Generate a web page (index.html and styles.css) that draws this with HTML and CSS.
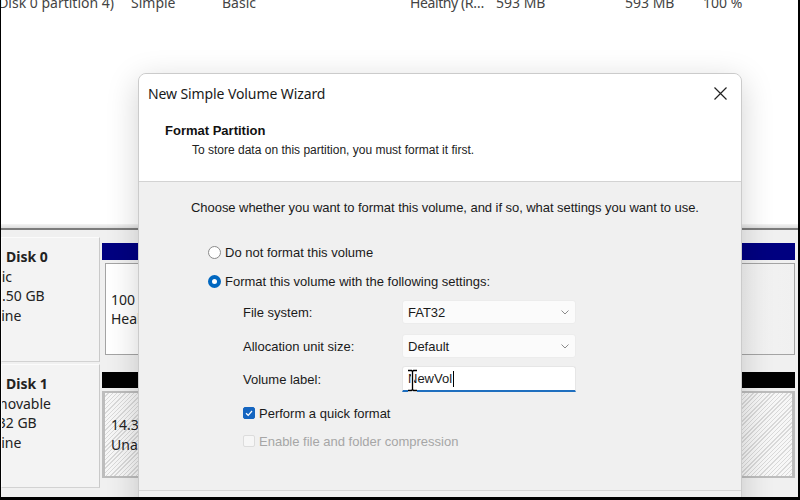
FILE: index.html
```html
<!DOCTYPE html>
<html>
<head>
<meta charset="utf-8">
<link rel="stylesheet" href="styles.css">
</head>
<body>
<div class="top">
  <div class="vrow">
    <span class="c c1"><span>(Disk 0 partition 4)</span></span>
    <span class="c c2">Simple</span>
    <span class="c c3">Basic</span>
    <span class="c c4">Healthy (R…</span>
    <span class="c c5">593 MB</span>
    <span class="c c6">593 MB</span>
    <span class="c c7">100 %</span>
  </div>
</div>
<div class="sep-light"></div>
<div class="sep-dark"></div>
<div class="map">
  <div class="disk d0">
    <div class="label">
      <div class="ltext">
        <div class="lline"><span class="icon-space"></span><b>Disk 0</b></div>
        <div class="lline">Basic</div>
        <div class="lline">237.50 GB</div>
        <div class="lline">Online</div>
      </div>
    </div>
    <div class="parts">
      <div class="bar navy"></div>
      <div class="pbox plain">
        <div class="ptext">100 MB<br>Healthy (EFI System Partition)</div>
      </div>
    </div>
  </div>
  <div class="disk d1">
    <div class="label">
      <div class="ltext">
        <div class="lline"><span class="icon-space"></span><b>Disk 1</b></div>
        <div class="lline">Removable</div>
        <div class="lline">14.32 GB</div>
        <div class="lline">Online</div>
      </div>
    </div>
    <div class="parts">
      <div class="bar black"></div>
      <div class="pbox hatch">
        <div class="ptext">14.32 GB<br>Unallocated</div>
      </div>
    </div>
  </div>
</div>

<div class="dialog">
  <div class="titlebar">
    <span class="title">New Simple Volume Wizard</span>
    <svg class="close" width="13" height="13" viewBox="0 0 13 13"><path d="M0.5 0.5 L12.5 12.5 M12.5 0.5 L0.5 12.5" stroke="#222" stroke-width="1.2" fill="none"/></svg>
  </div>
  <div class="header">
    <div class="h-title">Format Partition</div>
    <div class="h-sub">To store data on this partition, you must format it first.</div>
  </div>
  <div class="body">
    <div class="intro">Choose whether you want to format this volume, and if so, what settings you want to use.</div>
    <div class="opt opt1"><span class="radio"></span><span>Do not format this volume</span></div>
    <div class="opt opt2"><span class="radio on"></span><span>Format this volume with the following settings:</span></div>
    <div class="settings">
      <div class="srow">
        <span class="slabel">File system:</span>
        <div class="select"><span>FAT32</span>
          <svg width="8" height="5" viewBox="0 0 8 5"><path d="M0.5 0.5 L4 4 L7.5 0.5" stroke="#8a8a8a" stroke-width="1" fill="none"/></svg>
        </div>
      </div>
      <div class="srow">
        <span class="slabel">Allocation unit size:</span>
        <div class="select"><span>Default</span>
          <svg width="8" height="5" viewBox="0 0 8 5"><path d="M0.5 0.5 L4 4 L7.5 0.5" stroke="#8a8a8a" stroke-width="1" fill="none"/></svg>
        </div>
      </div>
      <div class="srow srow-input">
        <span class="slabel">Volume label:</span>
        <div class="input"><span class="val">NewVol</span><span class="caret"></span>
          <svg class="ibeam" width="11" height="23" viewBox="0 0 11 23"><path d="M1 1.5 H4.5 L5.5 2.5 L6.5 1.5 H10 M5.5 2.5 V20.5 M1 21.5 H4.5 L5.5 20.5 L6.5 21.5 H10" stroke="#fff" stroke-width="3" fill="none"/><path d="M1 1.5 H4.5 L5.5 2.5 L6.5 1.5 H10 M5.5 2.5 V20.5 M1 21.5 H4.5 L5.5 20.5 L6.5 21.5 H10" stroke="#000" stroke-width="1.3" fill="none"/></svg>
        </div>
      </div>
      <div class="chk chk1"><span class="box on"><svg width="12" height="12" viewBox="0 0 12 12"><path d="M3 6.2 L5.2 8.3 L9 4" stroke="#fff" stroke-width="1.2" fill="none"/></svg></span><span>Perform a quick format</span></div>
      <div class="chk chk2 disabled"><span class="box"></span><span>Enable file and folder compression</span></div>
    </div>
  </div>
  <div class="footer-sep"></div>
</div>
</body>
</html>
```
FILE: styles.css
```css
html, body {
  margin: 0;
  padding: 0;
}
body {
  width: 800px;
  height: 500px;
  box-sizing: border-box;
  border-left: 1px solid #000;
  border-right: 2px solid #000;
  border-bottom: 3px solid #000;
  overflow: hidden;
  position: relative;
  background: #f0f0f0;
  font-family: "Noto Sans", "Liberation Sans", sans-serif;
  color: #222;
}
.top {
  height: 224px;
  background: #fff;
  overflow: hidden;
}
.vrow {
  display: grid;
  grid-template-columns: 130px 91px 188px 86px 129px 78px 1fr;
  margin-top: -7px;
  font-size: 14px;
  line-height: 20px;
  color: #444;
}
.c { white-space: nowrap; }
.c1 {
  display: flex;
  justify-content: flex-end;
  padding-right: 17px;
  min-width: 0;
}
.c1 span { flex: none; }
.c4 { letter-spacing: -0.4px; }
.sep-light {
  height: 4px;
  background: linear-gradient(#f4f4f4, #dcdcdc);
}
.sep-dark {
  height: 2px;
  background: #7c7c7c;
}
.map {
  padding-top: 7px;
  display: flex;
  flex-direction: column;
  gap: 2px;
}
.disk {
  display: flex;
  gap: 2px;
}
.d0 { height: 125px; }
.d1 { height: 124px; }
.label {
  width: 97px;
  background: #f3f3f3;
  border: 1px solid #fbfbfb;
  border-right: 1px solid #c9c9c9;
  border-bottom: 1px solid #d2d2d2;
  overflow: hidden;
}
.ltext {
  margin-left: -24px;
  padding-top: 9px;
  font-size: 14px;
  line-height: 19.5px;
  color: #222;
  white-space: nowrap;
}
.icon-space {
  display: inline-block;
  width: 28px;
}
.parts {
  flex: 1;
  display: flex;
  flex-direction: column;
  padding-right: 3px;
}
.d0 .parts { padding-top: 6px; }
.d1 .parts { padding-top: 8px; }
.bar { height: 17px; }
.navy { background: #000080; }
.black { background: #000; height: 16px; }
.pbox {
  display: flex;
  align-items: center;
  overflow: hidden;
  white-space: nowrap;
  font-size: 14px;
  line-height: 19.5px;
  color: #222;
}
.plain {
  margin: 3px 0 0 3px;
  height: 90px;
  border: 1px solid #a4a4a4;
  background: linear-gradient(90deg, #fff 60%, #f0f0f0);
}
.hatch {
  margin: 3px 0 0 0;
  height: 83px;
  border: 2px solid #bdbdbd;
  border-width: 2px 3px;
  background: repeating-linear-gradient(135deg, #f7f7f7 0 2px, #d9d9d9 2px 3px);
}
.plain .ptext { padding-left: 5px; }
.hatch .ptext { padding-left: 6px; }

/* dialog */
.dialog {
  position: absolute;
  left: 137px;
  top: 73px;
  width: 602px;
  height: 460px;
  background: #f0f0f0;
  border: 1px solid #cbcbcb;
  border-radius: 8px;
  box-shadow: 0 8px 32px rgba(0, 0, 0, 0.18);
  overflow: hidden;
  font-family: "Liberation Sans", Arial, sans-serif;
  font-size: 13px;
  color: #1a1a1a;
}
.titlebar {
  height: 38px;
  background: #fff;
  display: flex;
  align-items: center;
  justify-content: space-between;
  padding: 0 14px 0 9px;
}
.title {
  font-family: "Noto Sans", sans-serif;
  font-size: 14px;
  letter-spacing: -0.1px;
  color: #1a1a1a;
}
.close { display: block; }
.header {
  height: 70px;
  box-sizing: border-box;
  background: #fff;
  border-bottom: 1px solid #d3d3d3;
  padding: 11px 0 0 26px;
}
.h-title {
  font-weight: bold;
  font-size: 13px;
  line-height: 16px;
  color: #111;
}
.h-sub {
  margin-top: 3px;
  padding-left: 27px;
  font-size: 12px;
  line-height: 16px;
  color: #222;
}
.body {
  padding: 18px 0 0 52px;
}
.intro {
  line-height: 16px;
  letter-spacing: -0.05px;
}
.opt {
  display: flex;
  align-items: center;
  gap: 4px;
  height: 16px;
  margin-left: 17px;
}
.opt1 { margin-top: 28px; }
.opt2 { margin-top: 13px; }
.radio {
  width: 13px;
  height: 13px;
  box-sizing: border-box;
  border-radius: 50%;
  border: 1px solid #8a8a8a;
  background: #fff;
}
.radio.on {
  border: 4px solid #0067c0;
}
.settings {
  margin-left: 52px;
  margin-top: 11px;
}
.srow {
  display: flex;
  align-items: center;
  height: 24px;
  margin-bottom: 10px;
}
.srow-input {
  height: 26px;
  margin-top: -2px;
}
.slabel {
  width: 159px;
}
.select {
  width: 174px;
  height: 24px;
  box-sizing: border-box;
  background: #fbfbfb;
  border: 1px solid #ececec;
  border-radius: 3px;
  display: flex;
  align-items: center;
  justify-content: space-between;
  padding: 0 6px 0 5px;
}
.input {
  position: relative;
  width: 174px;
  height: 26px;
  box-sizing: border-box;
  background: #fff;
  border: 1px solid #e6e6e6;
  border-bottom: 2px solid #1f6fbf;
  border-radius: 3px 3px 0 0;
  display: flex;
  align-items: center;
  padding-left: 5px;
}
.caret {
  width: 1px;
  height: 16px;
  background: #000;
  margin-left: 1px;
}
.ibeam {
  position: absolute;
  left: 4px;
  top: 2px;
}
.chk {
  display: flex;
  align-items: center;
  gap: 4px;
  height: 16px;
}
.chk1 { margin-top: 13px; }
.chk2 { margin-top: 12px; }
.box {
  width: 12px;
  height: 12px;
  box-sizing: border-box;
  border-radius: 2px;
  border: 1px solid #dcdcdc;
  background: #f6f6f6;
  display: block;
}
.box svg { display: block; }
.box.on {
  background: #1565c0;
  border-color: #1565c0;
}
.box.on svg { margin: -1px; }
.disabled { color: #a6a6a6; }
.footer-sep {
  position: absolute;
  left: 0;
  right: 0;
  top: 416px;
  height: 1px;
  background: #d6d6d6;
}
```
